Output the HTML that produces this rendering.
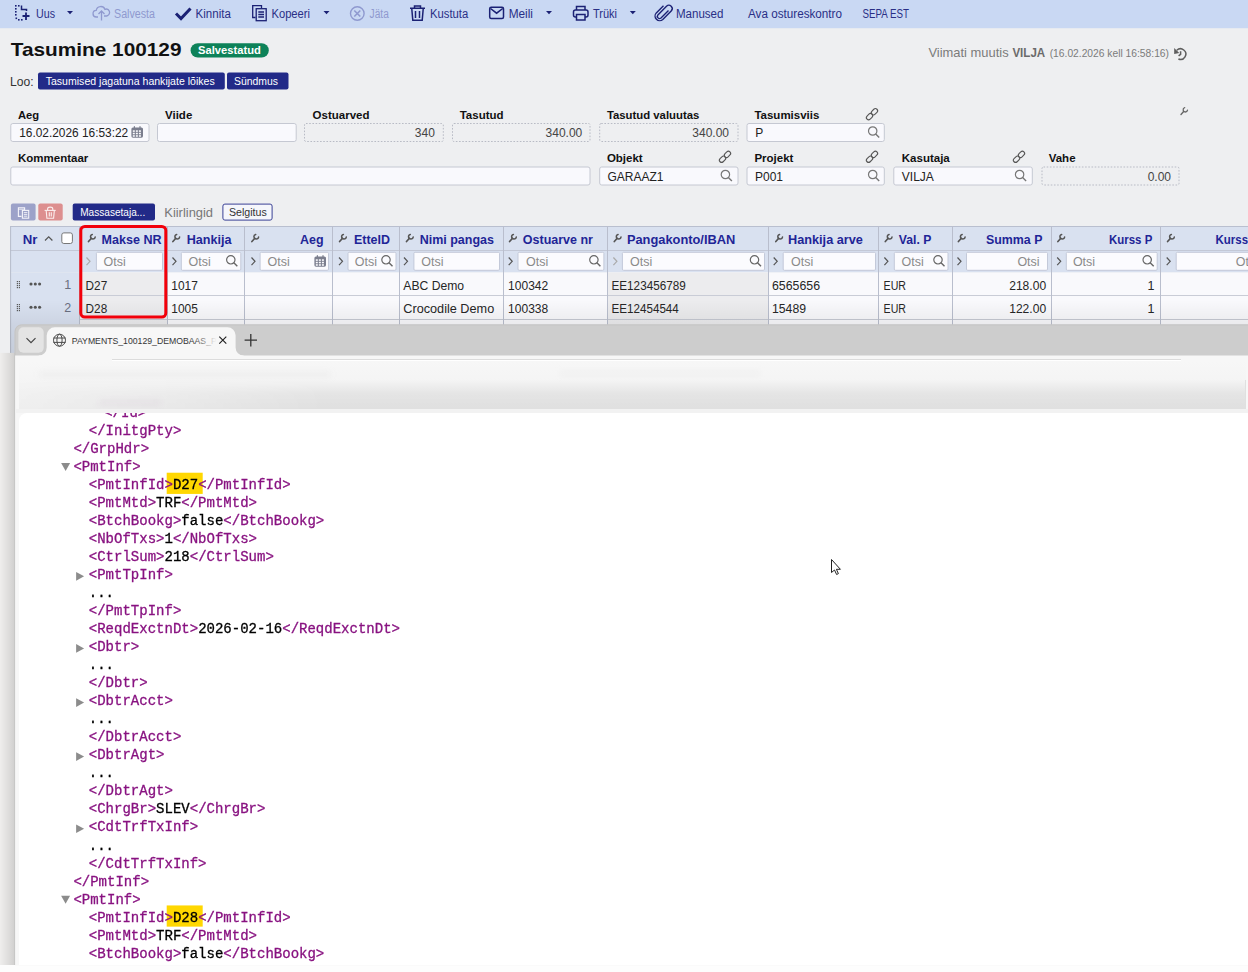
<!DOCTYPE html>
<html><head><meta charset="utf-8"><title>Tasumine 100129</title>
<style>html,body{margin:0;padding:0;width:1248px;height:972px;overflow:hidden;background:#eeeff1}svg{display:block}</style>
</head><body>
<svg width="1248" height="972" viewBox="0 0 1248 972"><rect x="0.00" y="0.00" width="1248.00" height="972.00" rx="0" fill="#eeeff1" />
<rect x="0.00" y="0.00" width="1248.00" height="28.20" rx="0" fill="#c9d8f3" />
<g fill="#1b2174"><rect x="15" y="5" width="1.6" height="1.6"/><rect x="18" y="5" width="1.6" height="1.6"/><rect x="15" y="8" width="1.6" height="1.6"/><rect x="15" y="11" width="1.6" height="1.6"/><rect x="15" y="14" width="1.6" height="1.6"/><rect x="15.5" y="17.5" width="1.6" height="1.6"/><rect x="18" y="19" width="1.6" height="1.6"/><rect x="21" y="19" width="1.6" height="1.6"/></g>
<path d="M21.5 5.5 V9.5 H26.5 V11" stroke="#1b2174" stroke-width="1.5" fill="none"/>
<path d="M22.5 16 H29.5 M26 12.5 V20" stroke="#1b2174" stroke-width="1.8" fill="none"/>
<text x="36.00" y="17.80" font-family='"Liberation Sans", sans-serif' font-size="12" font-weight="normal" fill="#2a2f86" text-anchor="start" textLength="19.00" lengthAdjust="spacingAndGlyphs" >Uus</text>
<path d="M67 11 L73 11 L70 14.3 Z" fill="#1b2174"/>
<path d="M98 17 H96.5 a3.3 3.3 0 0 1 -0.3 -6.6 a4.6 4.6 0 0 1 8.8 -1 a3.2 3.2 0 0 1 2.5 6.2 a2.5 2.5 0 0 1 -1 0.4 H104" stroke="#8f99cf" stroke-width="1.3" fill="none"/>
<path d="M101.5 20.5 V11.5 M98.5 14 L101.5 11 L104.5 14" stroke="#8f99cf" stroke-width="1.3" fill="none"/>
<text x="114.00" y="17.80" font-family='"Liberation Sans", sans-serif' font-size="12" font-weight="normal" fill="#8f99cf" text-anchor="start" textLength="41.00" lengthAdjust="spacingAndGlyphs" >Salvesta</text>
<path d="M176 13.5 L181 18.5 L190.5 8.5" stroke="#1b2174" stroke-width="3" fill="none" stroke-linejoin="miter"/>
<text x="195.60" y="17.80" font-family='"Liberation Sans", sans-serif' font-size="12" font-weight="normal" fill="#2a2f86" text-anchor="start" textLength="35.20" lengthAdjust="spacingAndGlyphs" >Kinnita</text>
<g stroke="#1b2174" stroke-width="1.3" fill="none"><path d="M255.5 17.5 H252.7 V5.7 H261.5 V8"/><rect x="256.2" y="8.7" width="10" height="12" fill="#c9d8f3"/><path d="M258.3 12 H264 M258.3 14.5 H264 M258.3 17 H264"/></g>
<text x="271.50" y="17.80" font-family='"Liberation Sans", sans-serif' font-size="12" font-weight="normal" fill="#2a2f86" text-anchor="start" textLength="38.50" lengthAdjust="spacingAndGlyphs" >Kopeeri</text>
<path d="M323.5 11 L329.5 11 L326.5 14.3 Z" fill="#1b2174"/>
<circle cx="357.3" cy="13.5" r="6.8" stroke="#8f99cf" stroke-width="1.4" fill="none"/>
<path d="M354.3 10.5 L360.3 16.5 M360.3 10.5 L354.3 16.5" stroke="#8f99cf" stroke-width="1.6"/>
<text x="369.60" y="17.80" font-family='"Liberation Sans", sans-serif' font-size="12" font-weight="normal" fill="#8f99cf" text-anchor="start" textLength="19.20" lengthAdjust="spacingAndGlyphs" >Jäta</text>
<g stroke="#1b2174" stroke-width="1.5" fill="none"><path d="M410 8.2 H425 M414.5 8 V6 H420.5 V8"/><path d="M411.8 9 L412.8 20.3 H422.2 L423.2 9"/><path d="M415.5 11 V18 M419.5 11 V18"/></g>
<text x="430.00" y="17.80" font-family='"Liberation Sans", sans-serif' font-size="12" font-weight="normal" fill="#2a2f86" text-anchor="start" textLength="38.30" lengthAdjust="spacingAndGlyphs" >Kustuta</text>
<rect x="489.7" y="7.2" width="13.8" height="11.2" rx="1.5" stroke="#1b2174" stroke-width="1.5" fill="none"/>
<path d="M490.5 8.5 L496.6 13.2 L502.7 8.5" stroke="#1b2174" stroke-width="1.5" fill="none"/>
<text x="508.70" y="17.80" font-family='"Liberation Sans", sans-serif' font-size="12" font-weight="normal" fill="#2a2f86" text-anchor="start" textLength="24.30" lengthAdjust="spacingAndGlyphs" >Meili</text>
<path d="M546 11 L552 11 L549 14.3 Z" fill="#1b2174"/>
<g stroke="#1b2174" stroke-width="1.5" fill="none"><path d="M576.5 10 V6.5 H585 V10"/><rect x="573.5" y="10" width="14.5" height="7" rx="2"/><rect x="576.5" y="14.5" width="8.5" height="5.5" fill="#c9d8f3"/></g>
<text x="593.00" y="17.80" font-family='"Liberation Sans", sans-serif' font-size="12" font-weight="normal" fill="#2a2f86" text-anchor="start" textLength="24.00" lengthAdjust="spacingAndGlyphs" >Trüki</text>
<path d="M629.8 11 L635.8 11 L632.8 14.3 Z" fill="#1b2174"/>
<path d="M668.5 10.5 L661 18 a2.2 2.2 0 0 1 -3.1 -3.1 L666.5 6.3 a3.3 3.3 0 0 1 4.7 4.7 L662.8 19.4 a4.6 4.6 0 0 1 -6.5 -6.5 L663.5 5.8" stroke="#1b2174" stroke-width="1.4" fill="none" transform="translate(0,0)"/>
<text x="675.90" y="17.80" font-family='"Liberation Sans", sans-serif' font-size="12" font-weight="normal" fill="#2a2f86" text-anchor="start" textLength="47.60" lengthAdjust="spacingAndGlyphs" >Manused</text>
<text x="748.00" y="17.80" font-family='"Liberation Sans", sans-serif' font-size="12" font-weight="normal" fill="#2a2f86" text-anchor="start" textLength="94.00" lengthAdjust="spacingAndGlyphs" >Ava ostureskontro</text>
<text x="862.60" y="17.80" font-family='"Liberation Sans", sans-serif' font-size="12" font-weight="normal" fill="#2a2f86" text-anchor="start" textLength="46.40" lengthAdjust="spacingAndGlyphs" >SEPA EST</text>
<text x="10.80" y="56.40" font-family='"Liberation Sans", sans-serif' font-size="19" font-weight="bold" fill="#111" text-anchor="start" textLength="170.70" lengthAdjust="spacingAndGlyphs" >Tasumine 100129</text>
<rect x="190.60" y="43.20" width="78.20" height="14.40" rx="7.2" fill="#0d8259" />
<text x="198.00" y="54.30" font-family='"Liberation Sans", sans-serif' font-size="11" font-weight="bold" fill="#ffffff" text-anchor="start" textLength="62.80" lengthAdjust="spacingAndGlyphs" >Salvestatud</text>
<text x="10.00" y="86.00" font-family='"Liberation Sans", sans-serif' font-size="12" font-weight="normal" fill="#333" text-anchor="start" textLength="23.60" lengthAdjust="spacingAndGlyphs" >Loo:</text>
<rect x="38.00" y="72.50" width="186.80" height="17.10" rx="2" fill="#222a88" />
<text x="45.70" y="85.20" font-family='"Liberation Sans", sans-serif' font-size="10.5" font-weight="normal" fill="#fff" text-anchor="start" textLength="169.00" lengthAdjust="spacingAndGlyphs" >Tasumised jagatuna hankijate lõikes</text>
<rect x="227.00" y="72.50" width="61.50" height="17.10" rx="2" fill="#222a88" />
<text x="234.00" y="85.20" font-family='"Liberation Sans", sans-serif' font-size="10.5" font-weight="normal" fill="#fff" text-anchor="start" textLength="44.00" lengthAdjust="spacingAndGlyphs" >Sündmus</text>
<text x="928.50" y="57.20" font-family='"Liberation Sans", sans-serif' font-size="13" font-weight="normal" fill="#7b7b7b" text-anchor="start" textLength="80.10" lengthAdjust="spacingAndGlyphs" >Viimati muutis</text>
<text x="1012.40" y="57.20" font-family='"Liberation Sans", sans-serif' font-size="12" font-weight="bold" fill="#6b6b6b" text-anchor="start" textLength="32.80" lengthAdjust="spacingAndGlyphs" >VILJA</text>
<text x="1049.70" y="57.20" font-family='"Liberation Sans", sans-serif' font-size="10.3" font-weight="normal" fill="#7b7b7b" text-anchor="start" textLength="119.30" lengthAdjust="spacingAndGlyphs" >(16.02.2026 kell 16:58:16)</text>
<g stroke="#5e5e5e" stroke-width="1.5" fill="none"><path d="M1176.8 50.3 A5.3 5.3 0 1 1 1178.4 59.0"/><path d="M1180.6 51.2 V54.3 L1178.6 55.8"/></g>
<path d="M1174.2 48 L1174.2 53.9 L1179.3 53.1 Z" fill="#5e5e5e"/>
<text x="18.00" y="119.20" font-family='"Liberation Sans", sans-serif' font-size="11.5" font-weight="bold" fill="#111" text-anchor="start" textLength="21.20" lengthAdjust="spacingAndGlyphs" >Aeg</text>
<text x="165.00" y="119.20" font-family='"Liberation Sans", sans-serif' font-size="11.5" font-weight="bold" fill="#111" text-anchor="start" >Viide</text>
<text x="312.60" y="119.20" font-family='"Liberation Sans", sans-serif' font-size="11.5" font-weight="bold" fill="#111" text-anchor="start" >Ostuarved</text>
<text x="459.70" y="119.20" font-family='"Liberation Sans", sans-serif' font-size="11.5" font-weight="bold" fill="#111" text-anchor="start" >Tasutud</text>
<text x="606.90" y="119.20" font-family='"Liberation Sans", sans-serif' font-size="11.5" font-weight="bold" fill="#111" text-anchor="start" textLength="92.40" lengthAdjust="spacingAndGlyphs" >Tasutud valuutas</text>
<text x="754.40" y="119.20" font-family='"Liberation Sans", sans-serif' font-size="11.5" font-weight="bold" fill="#111" text-anchor="start" >Tasumisviis</text>
<g transform="translate(866.00,108.70) rotate(-45 6 5.5)" stroke="#555" stroke-width="1.1" fill="none"><rect x="-1" y="3.3" width="7" height="4.4" rx="2.2"/><rect x="6" y="3.3" width="7" height="4.4" rx="2.2"/></g>
<g transform="translate(1180.2,106.8)" stroke="#666" fill="none" stroke-linecap="round"><path d="M0.8 7.6 L3.4 4.8" stroke-width="1.4"/><path d="M4.5 0.9 A2.2 2.2 0 1 0 7.3 3.4" stroke-width="1.3"/></g>
<rect x="10.80" y="123.50" width="138.20" height="18.00" rx="2" fill="#f9f9fd" stroke="#c5c8d2" stroke-width="1" />
<text x="19.20" y="137.20" font-family='"Liberation Sans", sans-serif' font-size="12" font-weight="normal" fill="#222" text-anchor="start" textLength="109.00" lengthAdjust="spacingAndGlyphs" >16.02.2026 16:53:22</text>
<g transform="translate(131.40,126.20)"><rect x="0" y="1.2" width="11.6" height="10.3" rx="1.6" fill="#7b7e8e"/><rect x="2.4" y="0" width="1.2" height="2" fill="#7b7e8e"/><rect x="8" y="0" width="1.2" height="2" fill="#7b7e8e"/><rect x="1.40" y="4.10" width="2.0" height="1.55" fill="#fbfbfe"/><rect x="4.45" y="4.10" width="2.0" height="1.55" fill="#fbfbfe"/><rect x="7.50" y="4.10" width="2.0" height="1.55" fill="#fbfbfe"/><rect x="1.40" y="6.55" width="2.0" height="1.55" fill="#fbfbfe"/><rect x="4.45" y="6.55" width="2.0" height="1.55" fill="#fbfbfe"/><rect x="7.50" y="6.55" width="2.0" height="1.55" fill="#fbfbfe"/><rect x="1.40" y="9.00" width="2.0" height="1.55" fill="#fbfbfe"/><rect x="4.45" y="9.00" width="2.0" height="1.55" fill="#fbfbfe"/><rect x="7.50" y="9.00" width="2.0" height="1.55" fill="#fbfbfe"/></g>
<rect x="157.50" y="123.50" width="138.70" height="18.00" rx="2" fill="#f9f9fd" stroke="#c5c8d2" stroke-width="1" />
<rect x="304.50" y="123.50" width="138.80" height="18.00" rx="1.5" fill="#eeeff1" stroke="#b8bbc5" stroke-width="1" stroke-dasharray="1.6 1.6"/>
<text x="434.90" y="137.20" font-family='"Liberation Sans", sans-serif' font-size="12" font-weight="normal" fill="#444" text-anchor="end" >340</text>
<rect x="452.50" y="123.50" width="137.50" height="18.00" rx="1.5" fill="#eeeff1" stroke="#b8bbc5" stroke-width="1" stroke-dasharray="1.6 1.6"/>
<text x="582.30" y="137.20" font-family='"Liberation Sans", sans-serif' font-size="12" font-weight="normal" fill="#444" text-anchor="end" >340.00</text>
<rect x="599.70" y="123.50" width="138.30" height="18.00" rx="1.5" fill="#eeeff1" stroke="#b8bbc5" stroke-width="1" stroke-dasharray="1.6 1.6"/>
<text x="729.00" y="137.20" font-family='"Liberation Sans", sans-serif' font-size="12" font-weight="normal" fill="#444" text-anchor="end" >340.00</text>
<rect x="747.00" y="123.50" width="137.30" height="18.00" rx="2" fill="#f9f9fd" stroke="#c5c8d2" stroke-width="1" />
<text x="755.20" y="137.20" font-family='"Liberation Sans", sans-serif' font-size="12" font-weight="normal" fill="#222" text-anchor="start" >P</text>
<g transform="translate(867.70,126.00) scale(1.0)" stroke="#777" stroke-width="1.2" fill="none"><circle cx="5" cy="5" r="4.2"/><path d="M8 8 L11.5 11.5" stroke-width="1.4"/></g>
<text x="18.00" y="162.30" font-family='"Liberation Sans", sans-serif' font-size="11.5" font-weight="bold" fill="#111" text-anchor="start" >Kommentaar</text>
<text x="606.90" y="162.30" font-family='"Liberation Sans", sans-serif' font-size="11.5" font-weight="bold" fill="#111" text-anchor="start" >Objekt</text>
<g transform="translate(719.00,151.30) rotate(-45 6 5.5)" stroke="#555" stroke-width="1.1" fill="none"><rect x="-1" y="3.3" width="7" height="4.4" rx="2.2"/><rect x="6" y="3.3" width="7" height="4.4" rx="2.2"/></g>
<text x="754.40" y="162.30" font-family='"Liberation Sans", sans-serif' font-size="11.5" font-weight="bold" fill="#111" text-anchor="start" >Projekt</text>
<g transform="translate(866.00,151.30) rotate(-45 6 5.5)" stroke="#555" stroke-width="1.1" fill="none"><rect x="-1" y="3.3" width="7" height="4.4" rx="2.2"/><rect x="6" y="3.3" width="7" height="4.4" rx="2.2"/></g>
<text x="901.80" y="162.30" font-family='"Liberation Sans", sans-serif' font-size="11.5" font-weight="bold" fill="#111" text-anchor="start" >Kasutaja</text>
<g transform="translate(1013.00,151.30) rotate(-45 6 5.5)" stroke="#555" stroke-width="1.1" fill="none"><rect x="-1" y="3.3" width="7" height="4.4" rx="2.2"/><rect x="6" y="3.3" width="7" height="4.4" rx="2.2"/></g>
<text x="1048.70" y="162.30" font-family='"Liberation Sans", sans-serif' font-size="11.5" font-weight="bold" fill="#111" text-anchor="start" >Vahe</text>
<rect x="10.80" y="167.00" width="579.20" height="18.00" rx="2" fill="#f9f9fd" stroke="#c5c8d2" stroke-width="1" />
<rect x="599.70" y="167.00" width="138.30" height="18.00" rx="2" fill="#f9f9fd" stroke="#c5c8d2" stroke-width="1" />
<text x="607.40" y="180.60" font-family='"Liberation Sans", sans-serif' font-size="12" font-weight="normal" fill="#222" text-anchor="start" >GARAAZ1</text>
<g transform="translate(720.40,169.50) scale(1.0)" stroke="#777" stroke-width="1.2" fill="none"><circle cx="5" cy="5" r="4.2"/><path d="M8 8 L11.5 11.5" stroke-width="1.4"/></g>
<rect x="747.00" y="167.00" width="137.30" height="18.00" rx="2" fill="#f9f9fd" stroke="#c5c8d2" stroke-width="1" />
<text x="755.00" y="180.60" font-family='"Liberation Sans", sans-serif' font-size="12" font-weight="normal" fill="#222" text-anchor="start" >P001</text>
<g transform="translate(867.70,169.50) scale(1.0)" stroke="#777" stroke-width="1.2" fill="none"><circle cx="5" cy="5" r="4.2"/><path d="M8 8 L11.5 11.5" stroke-width="1.4"/></g>
<rect x="893.80" y="167.00" width="138.50" height="18.00" rx="2" fill="#f9f9fd" stroke="#c5c8d2" stroke-width="1" />
<text x="901.80" y="180.60" font-family='"Liberation Sans", sans-serif' font-size="12" font-weight="normal" fill="#222" text-anchor="start" >VILJA</text>
<g transform="translate(1014.60,169.50) scale(1.0)" stroke="#777" stroke-width="1.2" fill="none"><circle cx="5" cy="5" r="4.2"/><path d="M8 8 L11.5 11.5" stroke-width="1.4"/></g>
<rect x="1042.00" y="167.00" width="137.00" height="18.00" rx="1.5" fill="#eeeff1" stroke="#b8bbc5" stroke-width="1" stroke-dasharray="1.6 1.6"/>
<text x="1171.00" y="180.60" font-family='"Liberation Sans", sans-serif' font-size="12" font-weight="normal" fill="#444" text-anchor="end" >0.00</text>
<rect x="10.90" y="203.60" width="24.70" height="17.00" rx="2" fill="#9ca2c9" />
<g stroke="#f4f4fa" stroke-width="1.1" fill="none"><path d="M21.5 216.4 H18.4 V207.7 H24.6 V210"/><path d="M18.6 209.2 H24.4" stroke-width="0.9"/><rect x="22.4" y="210.4" width="6.3" height="7.8" fill="#9ca2c9"/><path d="M23.8 212.6 H27.3 M23.8 214.4 H27.3 M23.8 216.2 H27.3" stroke-width="0.9"/></g>
<rect x="38.30" y="203.60" width="24.40" height="17.00" rx="2" fill="#dd8f8f" />
<g stroke="#fbeeee" stroke-width="1.1" fill="none"><path d="M44.6 210.4 H55.7"/><path d="M47.6 210.2 V209 a2.6 1.9 0 0 1 5.2 0 V210.2"/><path d="M46.2 210.6 L46.9 218.3 H53.6 L54.3 210.6"/><path d="M49.3 212.3 V216.6 M51.3 212.3 V216.6"/></g>
<rect x="72.70" y="203.60" width="82.30" height="17.00" rx="2" fill="#222a88" />
<text x="80.20" y="216.30" font-family='"Liberation Sans", sans-serif' font-size="10" font-weight="normal" fill="#fff" text-anchor="start" textLength="65.00" lengthAdjust="spacingAndGlyphs" >Massasetaja...</text>
<text x="164.30" y="217.30" font-family='"Liberation Sans", sans-serif' font-size="13" font-weight="normal" fill="#777" text-anchor="start" textLength="48.70" lengthAdjust="spacingAndGlyphs" >Kiirlingid</text>
<rect x="222.90" y="204.10" width="49.20" height="16.00" rx="2" fill="#f5f6fb" stroke="#3a4196" stroke-width="1" />
<text x="229.00" y="216.30" font-family='"Liberation Sans", sans-serif' font-size="10.6" font-weight="normal" fill="#333" text-anchor="start" textLength="37.80" lengthAdjust="spacingAndGlyphs" >Selgitus</text>
<rect x="10.10" y="226.30" width="1237.90" height="46.20" rx="0" fill="#d9e1f0" />
<rect x="10.10" y="272.50" width="69.90" height="81.00" rx="0" fill="#d9e1f0" />
<rect x="80.00" y="272.50" width="1168.00" height="60.00" rx="0" fill="#f9f9fc" />
<rect x="80.00" y="272.50" width="87.30" height="60.00" rx="0" fill="#ececee" />
<rect x="607.20" y="272.50" width="160.80" height="60.00" rx="0" fill="#ececee" />
<line x1="10.10" y1="226.50" x2="1248.00" y2="226.50" stroke="#b9bfcf" stroke-width="1" />
<line x1="10.10" y1="250.50" x2="1248.00" y2="250.50" stroke="#c3c8d6" stroke-width="1" />
<line x1="80.00" y1="295.50" x2="1248.00" y2="295.50" stroke="#c9ccd6" stroke-width="1" />
<line x1="80.00" y1="319.50" x2="1248.00" y2="319.50" stroke="#c6c9d3" stroke-width="1" />
<line x1="10.60" y1="226.30" x2="10.60" y2="353.00" stroke="#b7bccb" stroke-width="1" />
<line x1="79.50" y1="226.30" x2="79.50" y2="330.00" stroke="#b9becd" stroke-width="1" />
<line x1="167.50" y1="226.30" x2="167.50" y2="330.00" stroke="#b9becd" stroke-width="1" />
<line x1="244.50" y1="226.30" x2="244.50" y2="330.00" stroke="#b9becd" stroke-width="1" />
<line x1="332.50" y1="226.30" x2="332.50" y2="330.00" stroke="#b9becd" stroke-width="1" />
<line x1="399.50" y1="226.30" x2="399.50" y2="330.00" stroke="#b9becd" stroke-width="1" />
<line x1="503.50" y1="226.30" x2="503.50" y2="330.00" stroke="#b9becd" stroke-width="1" />
<line x1="607.50" y1="226.30" x2="607.50" y2="330.00" stroke="#b9becd" stroke-width="1" />
<line x1="768.50" y1="226.30" x2="768.50" y2="330.00" stroke="#b9becd" stroke-width="1" />
<line x1="878.50" y1="226.30" x2="878.50" y2="330.00" stroke="#b9becd" stroke-width="1" />
<line x1="952.50" y1="226.30" x2="952.50" y2="330.00" stroke="#b9becd" stroke-width="1" />
<line x1="1051.50" y1="226.30" x2="1051.50" y2="330.00" stroke="#b9becd" stroke-width="1" />
<line x1="1160.50" y1="226.30" x2="1160.50" y2="330.00" stroke="#b9becd" stroke-width="1" />
<text x="22.80" y="243.90" font-family='"Liberation Sans", sans-serif' font-size="12.5" font-weight="bold" fill="#1f2597" text-anchor="start" textLength="14.70" lengthAdjust="spacingAndGlyphs" >Nr</text>
<path d="M45 240.5 L48.7 236.8 L52.4 240.5" stroke="#555" stroke-width="1.2" fill="none"/>
<rect x="61.80" y="232.90" width="10.60" height="10.60" rx="2" fill="#fff" stroke="#777" stroke-width="1" />
<text x="101.60" y="243.90" font-family='"Liberation Sans", sans-serif' font-size="12.5" font-weight="bold" fill="#1f2597" text-anchor="start" textLength="59.90" lengthAdjust="spacingAndGlyphs" >Makse NR</text>
<g transform="translate(87.60,233.50)" stroke="#555" fill="none" stroke-linecap="round"><path d="M0.9 8.0 L3.6 5.0" stroke-width="1.7"/><path d="M4.7 0.9 A2.35 2.35 0 1 0 7.6 3.5" stroke-width="1.5"/></g>
<text x="186.70" y="243.90" font-family='"Liberation Sans", sans-serif' font-size="12.5" font-weight="bold" fill="#1f2597" text-anchor="start" textLength="44.80" lengthAdjust="spacingAndGlyphs" >Hankija</text>
<g transform="translate(172.00,233.50)" stroke="#555" fill="none" stroke-linecap="round"><path d="M0.9 8.0 L3.6 5.0" stroke-width="1.7"/><path d="M4.7 0.9 A2.35 2.35 0 1 0 7.6 3.5" stroke-width="1.5"/></g>
<text x="323.50" y="243.90" font-family='"Liberation Sans", sans-serif' font-size="12.5" font-weight="bold" fill="#1f2597" text-anchor="end" textLength="23.50" lengthAdjust="spacingAndGlyphs" >Aeg</text>
<g transform="translate(251.00,233.50)" stroke="#555" fill="none" stroke-linecap="round"><path d="M0.9 8.0 L3.6 5.0" stroke-width="1.7"/><path d="M4.7 0.9 A2.35 2.35 0 1 0 7.6 3.5" stroke-width="1.5"/></g>
<text x="354.00" y="243.90" font-family='"Liberation Sans", sans-serif' font-size="12.5" font-weight="bold" fill="#1f2597" text-anchor="start" textLength="36.00" lengthAdjust="spacingAndGlyphs" >EtteID</text>
<g transform="translate(338.70,233.50)" stroke="#555" fill="none" stroke-linecap="round"><path d="M0.9 8.0 L3.6 5.0" stroke-width="1.7"/><path d="M4.7 0.9 A2.35 2.35 0 1 0 7.6 3.5" stroke-width="1.5"/></g>
<text x="419.70" y="243.90" font-family='"Liberation Sans", sans-serif' font-size="12.5" font-weight="bold" fill="#1f2597" text-anchor="start" textLength="74.30" lengthAdjust="spacingAndGlyphs" >Nimi pangas</text>
<g transform="translate(405.60,233.50)" stroke="#555" fill="none" stroke-linecap="round"><path d="M0.9 8.0 L3.6 5.0" stroke-width="1.7"/><path d="M4.7 0.9 A2.35 2.35 0 1 0 7.6 3.5" stroke-width="1.5"/></g>
<text x="522.80" y="243.90" font-family='"Liberation Sans", sans-serif' font-size="12.5" font-weight="bold" fill="#1f2597" text-anchor="start" textLength="70.20" lengthAdjust="spacingAndGlyphs" >Ostuarve nr</text>
<g transform="translate(508.70,233.50)" stroke="#555" fill="none" stroke-linecap="round"><path d="M0.9 8.0 L3.6 5.0" stroke-width="1.7"/><path d="M4.7 0.9 A2.35 2.35 0 1 0 7.6 3.5" stroke-width="1.5"/></g>
<text x="626.90" y="243.90" font-family='"Liberation Sans", sans-serif' font-size="12.5" font-weight="bold" fill="#1f2597" text-anchor="start" textLength="108.40" lengthAdjust="spacingAndGlyphs" >Pangakonto/IBAN</text>
<g transform="translate(613.40,233.50)" stroke="#555" fill="none" stroke-linecap="round"><path d="M0.9 8.0 L3.6 5.0" stroke-width="1.7"/><path d="M4.7 0.9 A2.35 2.35 0 1 0 7.6 3.5" stroke-width="1.5"/></g>
<text x="788.00" y="243.90" font-family='"Liberation Sans", sans-serif' font-size="12.5" font-weight="bold" fill="#1f2597" text-anchor="start" textLength="74.90" lengthAdjust="spacingAndGlyphs" >Hankija arve</text>
<g transform="translate(774.90,233.50)" stroke="#555" fill="none" stroke-linecap="round"><path d="M0.9 8.0 L3.6 5.0" stroke-width="1.7"/><path d="M4.7 0.9 A2.35 2.35 0 1 0 7.6 3.5" stroke-width="1.5"/></g>
<text x="898.80" y="243.90" font-family='"Liberation Sans", sans-serif' font-size="12.5" font-weight="bold" fill="#1f2597" text-anchor="start" textLength="32.50" lengthAdjust="spacingAndGlyphs" >Val. P</text>
<g transform="translate(884.40,233.50)" stroke="#555" fill="none" stroke-linecap="round"><path d="M0.9 8.0 L3.6 5.0" stroke-width="1.7"/><path d="M4.7 0.9 A2.35 2.35 0 1 0 7.6 3.5" stroke-width="1.5"/></g>
<text x="1042.40" y="243.90" font-family='"Liberation Sans", sans-serif' font-size="12.5" font-weight="bold" fill="#1f2597" text-anchor="end" textLength="56.40" lengthAdjust="spacingAndGlyphs" >Summa P</text>
<g transform="translate(957.50,233.50)" stroke="#555" fill="none" stroke-linecap="round"><path d="M0.9 8.0 L3.6 5.0" stroke-width="1.7"/><path d="M4.7 0.9 A2.35 2.35 0 1 0 7.6 3.5" stroke-width="1.5"/></g>
<text x="1152.30" y="243.90" font-family='"Liberation Sans", sans-serif' font-size="12.5" font-weight="bold" fill="#1f2597" text-anchor="end" textLength="43.30" lengthAdjust="spacingAndGlyphs" >Kurss P</text>
<g transform="translate(1057.00,233.50)" stroke="#555" fill="none" stroke-linecap="round"><path d="M0.9 8.0 L3.6 5.0" stroke-width="1.7"/><path d="M4.7 0.9 A2.35 2.35 0 1 0 7.6 3.5" stroke-width="1.5"/></g>
<text x="1215.60" y="243.90" font-family='"Liberation Sans", sans-serif' font-size="12.5" font-weight="bold" fill="#1f2597" text-anchor="start" textLength="43.30" lengthAdjust="spacingAndGlyphs" >Kurss P</text>
<g transform="translate(1166.70,233.50)" stroke="#555" fill="none" stroke-linecap="round"><path d="M0.9 8.0 L3.6 5.0" stroke-width="1.7"/><path d="M4.7 0.9 A2.35 2.35 0 1 0 7.6 3.5" stroke-width="1.5"/></g>
<path d="M86.50 257.50 l3.5 3.8 l-3.5 3.8" stroke="#aaa" stroke-width="1.2" fill="none"/>
<rect x="96.40" y="252.30" width="66.10" height="18.00" rx="1.2" fill="#fbfbfe" stroke="#c3c9d9" stroke-width="1" />
<text x="103.60" y="266.30" font-family='"Liberation Sans", sans-serif' font-size="12.5" font-weight="normal" fill="#8a8a8a" text-anchor="start" textLength="22.20" lengthAdjust="spacingAndGlyphs" >Otsi</text>
<path d="M172.50 257.50 l3.5 3.8 l-3.5 3.8" stroke="#555" stroke-width="1.2" fill="none"/>
<rect x="181.30" y="252.30" width="59.50" height="18.00" rx="1.2" fill="#fbfbfe" stroke="#c3c9d9" stroke-width="1" />
<text x="188.50" y="266.30" font-family='"Liberation Sans", sans-serif' font-size="12.5" font-weight="normal" fill="#8a8a8a" text-anchor="start" textLength="22.20" lengthAdjust="spacingAndGlyphs" >Otsi</text>
<g transform="translate(225.80,254.80) scale(1.0)" stroke="#666" stroke-width="1.2" fill="none"><circle cx="5" cy="5" r="4.2"/><path d="M8 8 L11.5 11.5" stroke-width="1.4"/></g>
<path d="M251.50 257.50 l3.5 3.8 l-3.5 3.8" stroke="#555" stroke-width="1.2" fill="none"/>
<rect x="260.10" y="252.30" width="68.40" height="18.00" rx="1.2" fill="#fbfbfe" stroke="#c3c9d9" stroke-width="1" />
<text x="267.50" y="266.30" font-family='"Liberation Sans", sans-serif' font-size="12.5" font-weight="normal" fill="#8a8a8a" text-anchor="start" textLength="22.20" lengthAdjust="spacingAndGlyphs" >Otsi</text>
<g transform="translate(314.40,255.20)"><rect x="0" y="1.2" width="11.6" height="10.3" rx="1.6" fill="#7b7e8e"/><rect x="2.4" y="0" width="1.2" height="2" fill="#7b7e8e"/><rect x="8" y="0" width="1.2" height="2" fill="#7b7e8e"/><rect x="1.40" y="4.10" width="2.0" height="1.55" fill="#fbfbfe"/><rect x="4.45" y="4.10" width="2.0" height="1.55" fill="#fbfbfe"/><rect x="7.50" y="4.10" width="2.0" height="1.55" fill="#fbfbfe"/><rect x="1.40" y="6.55" width="2.0" height="1.55" fill="#fbfbfe"/><rect x="4.45" y="6.55" width="2.0" height="1.55" fill="#fbfbfe"/><rect x="7.50" y="6.55" width="2.0" height="1.55" fill="#fbfbfe"/><rect x="1.40" y="9.00" width="2.0" height="1.55" fill="#fbfbfe"/><rect x="4.45" y="9.00" width="2.0" height="1.55" fill="#fbfbfe"/><rect x="7.50" y="9.00" width="2.0" height="1.55" fill="#fbfbfe"/></g>
<path d="M339.00 257.50 l3.5 3.8 l-3.5 3.8" stroke="#555" stroke-width="1.2" fill="none"/>
<rect x="348.00" y="252.30" width="48.00" height="18.00" rx="1.2" fill="#fbfbfe" stroke="#c3c9d9" stroke-width="1" />
<text x="354.80" y="266.30" font-family='"Liberation Sans", sans-serif' font-size="12.5" font-weight="normal" fill="#8a8a8a" text-anchor="start" textLength="22.20" lengthAdjust="spacingAndGlyphs" >Otsi</text>
<g transform="translate(381.00,254.80) scale(1.0)" stroke="#666" stroke-width="1.2" fill="none"><circle cx="5" cy="5" r="4.2"/><path d="M8 8 L11.5 11.5" stroke-width="1.4"/></g>
<path d="M404.00 257.50 l3.5 3.8 l-3.5 3.8" stroke="#555" stroke-width="1.2" fill="none"/>
<rect x="413.90" y="252.30" width="85.60" height="18.00" rx="1.2" fill="#fbfbfe" stroke="#c3c9d9" stroke-width="1" />
<text x="421.30" y="266.30" font-family='"Liberation Sans", sans-serif' font-size="12.5" font-weight="normal" fill="#8a8a8a" text-anchor="start" textLength="22.20" lengthAdjust="spacingAndGlyphs" >Otsi</text>
<path d="M508.70 257.50 l3.5 3.8 l-3.5 3.8" stroke="#555" stroke-width="1.2" fill="none"/>
<rect x="518.00" y="252.30" width="85.90" height="18.00" rx="1.2" fill="#fbfbfe" stroke="#c3c9d9" stroke-width="1" />
<text x="526.00" y="266.30" font-family='"Liberation Sans", sans-serif' font-size="12.5" font-weight="normal" fill="#8a8a8a" text-anchor="start" textLength="22.20" lengthAdjust="spacingAndGlyphs" >Otsi</text>
<g transform="translate(588.90,254.80) scale(1.0)" stroke="#666" stroke-width="1.2" fill="none"><circle cx="5" cy="5" r="4.2"/><path d="M8 8 L11.5 11.5" stroke-width="1.4"/></g>
<path d="M613.40 257.50 l3.5 3.8 l-3.5 3.8" stroke="#aaa" stroke-width="1.2" fill="none"/>
<rect x="622.40" y="252.30" width="142.10" height="18.00" rx="1.2" fill="#fbfbfe" stroke="#c3c9d9" stroke-width="1" />
<text x="630.00" y="266.30" font-family='"Liberation Sans", sans-serif' font-size="12.5" font-weight="normal" fill="#8a8a8a" text-anchor="start" textLength="22.20" lengthAdjust="spacingAndGlyphs" >Otsi</text>
<g transform="translate(749.50,254.80) scale(1.0)" stroke="#666" stroke-width="1.2" fill="none"><circle cx="5" cy="5" r="4.2"/><path d="M8 8 L11.5 11.5" stroke-width="1.4"/></g>
<path d="M773.70 257.50 l3.5 3.8 l-3.5 3.8" stroke="#555" stroke-width="1.2" fill="none"/>
<rect x="783.20" y="252.30" width="92.30" height="18.00" rx="1.2" fill="#fbfbfe" stroke="#c3c9d9" stroke-width="1" />
<text x="791.00" y="266.30" font-family='"Liberation Sans", sans-serif' font-size="12.5" font-weight="normal" fill="#8a8a8a" text-anchor="start" textLength="22.20" lengthAdjust="spacingAndGlyphs" >Otsi</text>
<path d="M884.40 257.50 l3.5 3.8 l-3.5 3.8" stroke="#555" stroke-width="1.2" fill="none"/>
<rect x="894.30" y="252.30" width="53.70" height="18.00" rx="1.2" fill="#fbfbfe" stroke="#c3c9d9" stroke-width="1" />
<text x="901.60" y="266.30" font-family='"Liberation Sans", sans-serif' font-size="12.5" font-weight="normal" fill="#8a8a8a" text-anchor="start" textLength="22.20" lengthAdjust="spacingAndGlyphs" >Otsi</text>
<g transform="translate(933.00,254.80) scale(1.0)" stroke="#666" stroke-width="1.2" fill="none"><circle cx="5" cy="5" r="4.2"/><path d="M8 8 L11.5 11.5" stroke-width="1.4"/></g>
<path d="M957.50 257.50 l3.5 3.8 l-3.5 3.8" stroke="#555" stroke-width="1.2" fill="none"/>
<rect x="966.50" y="252.30" width="81.00" height="18.00" rx="1.2" fill="#fbfbfe" stroke="#c3c9d9" stroke-width="1" />
<text x="1039.60" y="266.30" font-family='"Liberation Sans", sans-serif' font-size="12.5" font-weight="normal" fill="#8a8a8a" text-anchor="end" textLength="22.20" lengthAdjust="spacingAndGlyphs" >Otsi</text>
<path d="M1057.20 257.50 l3.5 3.8 l-3.5 3.8" stroke="#555" stroke-width="1.2" fill="none"/>
<rect x="1066.30" y="252.30" width="90.90" height="18.00" rx="1.2" fill="#fbfbfe" stroke="#c3c9d9" stroke-width="1" />
<text x="1072.90" y="266.30" font-family='"Liberation Sans", sans-serif' font-size="12.5" font-weight="normal" fill="#8a8a8a" text-anchor="start" textLength="22.20" lengthAdjust="spacingAndGlyphs" >Otsi</text>
<g transform="translate(1142.20,254.80) scale(1.0)" stroke="#666" stroke-width="1.2" fill="none"><circle cx="5" cy="5" r="4.2"/><path d="M8 8 L11.5 11.5" stroke-width="1.4"/></g>
<path d="M1166.70 257.50 l3.5 3.8 l-3.5 3.8" stroke="#555" stroke-width="1.2" fill="none"/>
<rect x="1176.20" y="252.30" width="123.30" height="18.00" rx="1.2" fill="#fbfbfe" stroke="#c3c9d9" stroke-width="1" />
<text x="1258.00" y="266.30" font-family='"Liberation Sans", sans-serif' font-size="12.5" font-weight="normal" fill="#8a8a8a" text-anchor="end" textLength="22.20" lengthAdjust="spacingAndGlyphs" >Otsi</text>
<g fill="#5a5a5a"><rect x="16.80" y="281.00" width="1.2" height="1.2"/><rect x="18.80" y="281.00" width="1.2" height="1.2"/><rect x="16.80" y="283.00" width="1.2" height="1.2"/><rect x="18.80" y="283.00" width="1.2" height="1.2"/><rect x="16.80" y="285.00" width="1.2" height="1.2"/><rect x="18.80" y="285.00" width="1.2" height="1.2"/><rect x="16.80" y="287.00" width="1.2" height="1.2"/><rect x="18.80" y="287.00" width="1.2" height="1.2"/></g>
<g fill="#555"><circle cx="31.00" cy="284.00" r="1.55"/><circle cx="35.30" cy="284.00" r="1.55"/><circle cx="39.60" cy="284.00" r="1.55"/></g>
<text x="71.30" y="289.10" font-family='"Liberation Sans", sans-serif' font-size="12.5" font-weight="normal" fill="#6a6f80" text-anchor="end" >1</text>
<text x="85.60" y="289.50" font-family='"Liberation Sans", sans-serif' font-size="12.5" font-weight="normal" fill="#262626" text-anchor="start" textLength="21.60" lengthAdjust="spacingAndGlyphs" >D27</text>
<text x="171.30" y="289.50" font-family='"Liberation Sans", sans-serif' font-size="12.5" font-weight="normal" fill="#262626" text-anchor="start" textLength="26.50" lengthAdjust="spacingAndGlyphs" >1017</text>
<text x="403.30" y="289.50" font-family='"Liberation Sans", sans-serif' font-size="12.5" font-weight="normal" fill="#262626" text-anchor="start" textLength="60.80" lengthAdjust="spacingAndGlyphs" >ABC Demo</text>
<text x="508.10" y="289.50" font-family='"Liberation Sans", sans-serif' font-size="12.5" font-weight="normal" fill="#262626" text-anchor="start" textLength="40.10" lengthAdjust="spacingAndGlyphs" >100342</text>
<text x="611.50" y="289.50" font-family='"Liberation Sans", sans-serif' font-size="12.5" font-weight="normal" fill="#262626" text-anchor="start" textLength="74.20" lengthAdjust="spacingAndGlyphs" >EE123456789</text>
<text x="772.00" y="289.50" font-family='"Liberation Sans", sans-serif' font-size="12.5" font-weight="normal" fill="#262626" text-anchor="start" textLength="48.10" lengthAdjust="spacingAndGlyphs" >6565656</text>
<text x="883.60" y="289.50" font-family='"Liberation Sans", sans-serif' font-size="12.5" font-weight="normal" fill="#262626" text-anchor="start" textLength="22.40" lengthAdjust="spacingAndGlyphs" >EUR</text>
<text x="1046.10" y="289.50" font-family='"Liberation Sans", sans-serif' font-size="12.5" font-weight="normal" fill="#262626" text-anchor="end" textLength="36.90" lengthAdjust="spacingAndGlyphs" >218.00</text>
<text x="1154.40" y="289.50" font-family='"Liberation Sans", sans-serif' font-size="12.5" font-weight="normal" fill="#262626" text-anchor="end" >1</text>
<g fill="#5a5a5a"><rect x="16.80" y="304.00" width="1.2" height="1.2"/><rect x="18.80" y="304.00" width="1.2" height="1.2"/><rect x="16.80" y="306.00" width="1.2" height="1.2"/><rect x="18.80" y="306.00" width="1.2" height="1.2"/><rect x="16.80" y="308.00" width="1.2" height="1.2"/><rect x="18.80" y="308.00" width="1.2" height="1.2"/><rect x="16.80" y="310.00" width="1.2" height="1.2"/><rect x="18.80" y="310.00" width="1.2" height="1.2"/></g>
<g fill="#555"><circle cx="31.00" cy="307.30" r="1.55"/><circle cx="35.30" cy="307.30" r="1.55"/><circle cx="39.60" cy="307.30" r="1.55"/></g>
<text x="71.30" y="312.10" font-family='"Liberation Sans", sans-serif' font-size="12.5" font-weight="normal" fill="#6a6f80" text-anchor="end" >2</text>
<text x="85.60" y="312.50" font-family='"Liberation Sans", sans-serif' font-size="12.5" font-weight="normal" fill="#262626" text-anchor="start" textLength="21.60" lengthAdjust="spacingAndGlyphs" >D28</text>
<text x="171.30" y="312.50" font-family='"Liberation Sans", sans-serif' font-size="12.5" font-weight="normal" fill="#262626" text-anchor="start" textLength="26.50" lengthAdjust="spacingAndGlyphs" >1005</text>
<text x="403.30" y="312.50" font-family='"Liberation Sans", sans-serif' font-size="12.5" font-weight="normal" fill="#262626" text-anchor="start" textLength="90.90" lengthAdjust="spacingAndGlyphs" >Crocodile Demo</text>
<text x="508.10" y="312.50" font-family='"Liberation Sans", sans-serif' font-size="12.5" font-weight="normal" fill="#262626" text-anchor="start" textLength="40.10" lengthAdjust="spacingAndGlyphs" >100338</text>
<text x="611.50" y="312.50" font-family='"Liberation Sans", sans-serif' font-size="12.5" font-weight="normal" fill="#262626" text-anchor="start" textLength="67.30" lengthAdjust="spacingAndGlyphs" >EE12454544</text>
<text x="772.00" y="312.50" font-family='"Liberation Sans", sans-serif' font-size="12.5" font-weight="normal" fill="#262626" text-anchor="start" textLength="34.00" lengthAdjust="spacingAndGlyphs" >15489</text>
<text x="883.60" y="312.50" font-family='"Liberation Sans", sans-serif' font-size="12.5" font-weight="normal" fill="#262626" text-anchor="start" textLength="22.40" lengthAdjust="spacingAndGlyphs" >EUR</text>
<text x="1046.10" y="312.50" font-family='"Liberation Sans", sans-serif' font-size="12.5" font-weight="normal" fill="#262626" text-anchor="end" textLength="36.90" lengthAdjust="spacingAndGlyphs" >122.00</text>
<text x="1154.40" y="312.50" font-family='"Liberation Sans", sans-serif' font-size="12.5" font-weight="normal" fill="#262626" text-anchor="end" >1</text>
<defs><linearGradient id="appshade" x1="0" y1="0" x2="0" y2="1"><stop offset="0" stop-color="#000" stop-opacity="0"/><stop offset="0.47" stop-color="#000" stop-opacity="0.06"/><stop offset="1" stop-color="#000" stop-opacity="0.09"/></linearGradient></defs>
<rect x="10.10" y="300.00" width="1237.90" height="53.00" rx="0" fill="url(#appshade)" />
<rect x="80.80" y="226.40" width="85.00" height="90.70" rx="4" fill="none" stroke="#f2000a" stroke-width="3" />
<defs><linearGradient id="lstrip" x1="0" y1="0" x2="1" y2="0"><stop offset="0" stop-color="#efeeed"/><stop offset="0.6" stop-color="#dddcdb"/><stop offset="0.93" stop-color="#d2d1d0"/><stop offset="1" stop-color="#bdbcbb"/></linearGradient></defs>
<rect x="0.00" y="352.90" width="15.00" height="612.10" rx="0" fill="url(#lstrip)" />
<rect x="0.00" y="965.00" width="1248.00" height="7.00" rx="0" fill="#fdfdfd" />
<path d="M14.6 331.4 a7 7 0 0 1 7 -7 H1248 V965 H14.6 Z" fill="#cdcdcd"/>
<path d="M15.1 965 V331.4 a6.5 6.5 0 0 1 6.5 -6.5 H1248" stroke="#c4c4c4" stroke-width="1" fill="none"/>
<rect x="15.10" y="355.50" width="1233.40" height="610.00" rx="0" fill="#f7f7f7" />
<rect x="18.40" y="327.30" width="25.30" height="25.40" rx="5" fill="#e4e4e4" />
<path d="M26.5 338.2 L31 342.7 L35.5 338.2" stroke="#444" stroke-width="1.2" fill="none"/>
<path d="M38.7 355.5 a8 8 0 0 0 8 -8 V335.3 a8 8 0 0 1 8 -8 H227.6 a8 8 0 0 1 8 8 V347.5 a8 8 0 0 0 8 8 V356.5 H38.7 Z" fill="#f7f7f7"/>
<g stroke="#444" stroke-width="0.95" fill="none"><circle cx="59.5" cy="340.2" r="6"/><ellipse cx="59.5" cy="340.2" rx="2.6" ry="6"/><path d="M53.5 338 H65.5 M53.5 342.4 H65.5"/></g>
<defs><linearGradient id="tfade" x1="0" y1="0" x2="1" y2="0"><stop offset="0" stop-color="#333"/><stop offset="0.84" stop-color="#333"/><stop offset="1" stop-color="#333" stop-opacity="0"/></linearGradient></defs>
<text x="71.80" y="343.70" font-family='"Liberation Sans", sans-serif' font-size="9.2" font-weight="normal" fill="url(#tfade)" text-anchor="start" textLength="145.00" lengthAdjust="spacingAndGlyphs" >PAYMENTS_100129_DEMOBAAS_P</text>
<path d="M219.3 336.6 L226.3 343.6 M226.3 336.6 L219.3 343.6" stroke="#222" stroke-width="1.15"/>
<path d="M244.6 340.2 H257 M250.8 334 V346.4" stroke="#333" stroke-width="1.3"/>
<defs><filter id="blur8" x="-10%" y="-100%" width="120%" height="300%"><feGaussianBlur stdDeviation="3"/></filter><linearGradient id="tbgrad" x1="0" y1="0" x2="0" y2="1"><stop offset="0" stop-color="#f7f7f7"/><stop offset="0.5" stop-color="#f4f4f4"/><stop offset="1" stop-color="#f1f1f1"/></linearGradient><linearGradient id="bandv" x1="0" y1="0" x2="0" y2="1"><stop offset="0" stop-color="#000" stop-opacity="0"/><stop offset="0.45" stop-color="#000" stop-opacity="0.055"/><stop offset="1" stop-color="#000" stop-opacity="0.07"/></linearGradient><linearGradient id="bandh" x1="0" y1="0" x2="1" y2="0"><stop offset="0" stop-color="#fff" stop-opacity="0.15"/><stop offset="0.12" stop-color="#fff" stop-opacity="0.5"/><stop offset="0.25" stop-color="#fff" stop-opacity="1"/><stop offset="1" stop-color="#fff" stop-opacity="1"/></linearGradient><mask id="bandmask"><rect x="19" y="361" width="1227" height="48" fill="url(#bandh)"/></mask></defs>
<rect x="19.00" y="361.00" width="1227.00" height="48.00" rx="0" fill="url(#tbgrad)" />
<rect x="19.00" y="380.00" width="1227.00" height="29.00" rx="0" fill="url(#bandv)" mask="url(#bandmask)"/>
<g filter="url(#blur8)"><rect x="40" y="373" width="290" height="3" fill="#d8d8d8" opacity="0.45"/><rect x="560" y="372" width="200" height="3" fill="#dddddd" opacity="0.35"/><rect x="100" y="401" width="60" height="4" fill="#b07ab0" opacity="0.12"/></g>
<line x1="112.00" y1="359.50" x2="1181.00" y2="359.50" stroke="#dcdcdc" stroke-width="1" />
<line x1="112.00" y1="360.50" x2="1181.00" y2="360.50" stroke="#ffffff" stroke-width="1" />
<line x1="1245.50" y1="380.00" x2="1245.50" y2="409.00" stroke="#e0e0e0" stroke-width="1" />
<rect x="15.10" y="409.00" width="1233.40" height="4.00" rx="0" fill="#f2f2f2" />
<path d="M19 965 V421 a8 8 0 0 1 8 -8 H1248 V965 Z" fill="#ffffff"/>
<defs><clipPath id="cclip"><rect x="19" y="413" width="1229" height="552"/></clipPath></defs>
<g clip-path="url(#cclip)">
<rect x="166.70" y="472.72" width="36.00" height="21.20" rx="0" fill="#ffd700" />
<rect x="166.70" y="905.44" width="36.00" height="21.20" rx="0" fill="#ffd700" />
<text x="104.20" y="416.80" font-family='"Liberation Mono", monospace' font-size="14.02" font-weight="normal" fill="#881280" text-anchor="start" textLength="42.05" lengthAdjust="spacingAndGlyphs" xml:space="preserve" stroke="#881280" stroke-width="0.3">&lt;/Id&gt;</text>
<text x="88.80" y="434.83" font-family='"Liberation Mono", monospace' font-size="14.02" font-weight="normal" fill="#881280" text-anchor="start" textLength="92.51" lengthAdjust="spacingAndGlyphs" xml:space="preserve" stroke="#881280" stroke-width="0.3">&lt;/InitgPty&gt;</text>
<text x="73.40" y="452.86" font-family='"Liberation Mono", monospace' font-size="14.02" font-weight="normal" fill="#881280" text-anchor="start" textLength="75.69" lengthAdjust="spacingAndGlyphs" xml:space="preserve" stroke="#881280" stroke-width="0.3">&lt;/GrpHdr&gt;</text>
<path d="M61.10 462.99 h9 l-4.5 8 z" fill="#8c8c8c"/>
<text x="73.40" y="470.89" font-family='"Liberation Mono", monospace' font-size="14.02" font-weight="normal" fill="#881280" text-anchor="start" textLength="67.28" lengthAdjust="spacingAndGlyphs" xml:space="preserve" stroke="#881280" stroke-width="0.3">&lt;PmtInf&gt;</text>
<text x="88.80" y="488.92" font-family='"Liberation Mono", monospace' font-size="14.02" font-weight="normal" fill="#881280" text-anchor="start" textLength="84.10" lengthAdjust="spacingAndGlyphs" xml:space="preserve" stroke="#881280" stroke-width="0.3">&lt;PmtInfId&gt;</text>
<text x="172.90" y="488.92" font-family='"Liberation Mono", monospace' font-size="14.02" font-weight="normal" fill="#000" text-anchor="start" textLength="25.23" lengthAdjust="spacingAndGlyphs" xml:space="preserve" stroke="#000" stroke-width="0.3">D27</text>
<text x="198.13" y="488.92" font-family='"Liberation Mono", monospace' font-size="14.02" font-weight="normal" fill="#881280" text-anchor="start" textLength="92.51" lengthAdjust="spacingAndGlyphs" xml:space="preserve" stroke="#881280" stroke-width="0.3">&lt;/PmtInfId&gt;</text>
<text x="88.80" y="506.95" font-family='"Liberation Mono", monospace' font-size="14.02" font-weight="normal" fill="#881280" text-anchor="start" textLength="67.28" lengthAdjust="spacingAndGlyphs" xml:space="preserve" stroke="#881280" stroke-width="0.3">&lt;PmtMtd&gt;</text>
<text x="156.08" y="506.95" font-family='"Liberation Mono", monospace' font-size="14.02" font-weight="normal" fill="#000" text-anchor="start" textLength="25.23" lengthAdjust="spacingAndGlyphs" xml:space="preserve" stroke="#000" stroke-width="0.3">TRF</text>
<text x="181.31" y="506.95" font-family='"Liberation Mono", monospace' font-size="14.02" font-weight="normal" fill="#881280" text-anchor="start" textLength="75.69" lengthAdjust="spacingAndGlyphs" xml:space="preserve" stroke="#881280" stroke-width="0.3">&lt;/PmtMtd&gt;</text>
<text x="88.80" y="524.98" font-family='"Liberation Mono", monospace' font-size="14.02" font-weight="normal" fill="#881280" text-anchor="start" textLength="92.51" lengthAdjust="spacingAndGlyphs" xml:space="preserve" stroke="#881280" stroke-width="0.3">&lt;BtchBookg&gt;</text>
<text x="181.31" y="524.98" font-family='"Liberation Mono", monospace' font-size="14.02" font-weight="normal" fill="#000" text-anchor="start" textLength="42.05" lengthAdjust="spacingAndGlyphs" xml:space="preserve" stroke="#000" stroke-width="0.3">false</text>
<text x="223.36" y="524.98" font-family='"Liberation Mono", monospace' font-size="14.02" font-weight="normal" fill="#881280" text-anchor="start" textLength="100.92" lengthAdjust="spacingAndGlyphs" xml:space="preserve" stroke="#881280" stroke-width="0.3">&lt;/BtchBookg&gt;</text>
<text x="88.80" y="543.01" font-family='"Liberation Mono", monospace' font-size="14.02" font-weight="normal" fill="#881280" text-anchor="start" textLength="75.69" lengthAdjust="spacingAndGlyphs" xml:space="preserve" stroke="#881280" stroke-width="0.3">&lt;NbOfTxs&gt;</text>
<text x="164.49" y="543.01" font-family='"Liberation Mono", monospace' font-size="14.02" font-weight="normal" fill="#000" text-anchor="start" textLength="8.41" lengthAdjust="spacingAndGlyphs" xml:space="preserve" stroke="#000" stroke-width="0.3">1</text>
<text x="172.90" y="543.01" font-family='"Liberation Mono", monospace' font-size="14.02" font-weight="normal" fill="#881280" text-anchor="start" textLength="84.10" lengthAdjust="spacingAndGlyphs" xml:space="preserve" stroke="#881280" stroke-width="0.3">&lt;/NbOfTxs&gt;</text>
<text x="88.80" y="561.04" font-family='"Liberation Mono", monospace' font-size="14.02" font-weight="normal" fill="#881280" text-anchor="start" textLength="75.69" lengthAdjust="spacingAndGlyphs" xml:space="preserve" stroke="#881280" stroke-width="0.3">&lt;CtrlSum&gt;</text>
<text x="164.49" y="561.04" font-family='"Liberation Mono", monospace' font-size="14.02" font-weight="normal" fill="#000" text-anchor="start" textLength="25.23" lengthAdjust="spacingAndGlyphs" xml:space="preserve" stroke="#000" stroke-width="0.3">218</text>
<text x="189.72" y="561.04" font-family='"Liberation Mono", monospace' font-size="14.02" font-weight="normal" fill="#881280" text-anchor="start" textLength="84.10" lengthAdjust="spacingAndGlyphs" xml:space="preserve" stroke="#881280" stroke-width="0.3">&lt;/CtrlSum&gt;</text>
<path d="M76.10 571.97 v8.7 l8 -4.35 z" fill="#8c8c8c"/>
<text x="88.80" y="579.07" font-family='"Liberation Mono", monospace' font-size="14.02" font-weight="normal" fill="#881280" text-anchor="start" textLength="84.10" lengthAdjust="spacingAndGlyphs" xml:space="preserve" stroke="#881280" stroke-width="0.3">&lt;PmtTpInf&gt;</text>
<text x="88.80" y="597.10" font-family='"Liberation Mono", monospace' font-size="14.02" font-weight="normal" fill="#000" text-anchor="start" textLength="25.23" lengthAdjust="spacingAndGlyphs" xml:space="preserve" stroke="#000" stroke-width="0.3">...</text>
<text x="88.80" y="615.13" font-family='"Liberation Mono", monospace' font-size="14.02" font-weight="normal" fill="#881280" text-anchor="start" textLength="92.51" lengthAdjust="spacingAndGlyphs" xml:space="preserve" stroke="#881280" stroke-width="0.3">&lt;/PmtTpInf&gt;</text>
<text x="88.80" y="633.16" font-family='"Liberation Mono", monospace' font-size="14.02" font-weight="normal" fill="#881280" text-anchor="start" textLength="109.33" lengthAdjust="spacingAndGlyphs" xml:space="preserve" stroke="#881280" stroke-width="0.3">&lt;ReqdExctnDt&gt;</text>
<text x="198.13" y="633.16" font-family='"Liberation Mono", monospace' font-size="14.02" font-weight="normal" fill="#000" text-anchor="start" textLength="84.10" lengthAdjust="spacingAndGlyphs" xml:space="preserve" stroke="#000" stroke-width="0.3">2026-02-16</text>
<text x="282.23" y="633.16" font-family='"Liberation Mono", monospace' font-size="14.02" font-weight="normal" fill="#881280" text-anchor="start" textLength="117.74" lengthAdjust="spacingAndGlyphs" xml:space="preserve" stroke="#881280" stroke-width="0.3">&lt;/ReqdExctnDt&gt;</text>
<path d="M76.10 644.09 v8.7 l8 -4.35 z" fill="#8c8c8c"/>
<text x="88.80" y="651.19" font-family='"Liberation Mono", monospace' font-size="14.02" font-weight="normal" fill="#881280" text-anchor="start" textLength="50.46" lengthAdjust="spacingAndGlyphs" xml:space="preserve" stroke="#881280" stroke-width="0.3">&lt;Dbtr&gt;</text>
<text x="88.80" y="669.22" font-family='"Liberation Mono", monospace' font-size="14.02" font-weight="normal" fill="#000" text-anchor="start" textLength="25.23" lengthAdjust="spacingAndGlyphs" xml:space="preserve" stroke="#000" stroke-width="0.3">...</text>
<text x="88.80" y="687.25" font-family='"Liberation Mono", monospace' font-size="14.02" font-weight="normal" fill="#881280" text-anchor="start" textLength="58.87" lengthAdjust="spacingAndGlyphs" xml:space="preserve" stroke="#881280" stroke-width="0.3">&lt;/Dbtr&gt;</text>
<path d="M76.10 698.18 v8.7 l8 -4.35 z" fill="#8c8c8c"/>
<text x="88.80" y="705.28" font-family='"Liberation Mono", monospace' font-size="14.02" font-weight="normal" fill="#881280" text-anchor="start" textLength="84.10" lengthAdjust="spacingAndGlyphs" xml:space="preserve" stroke="#881280" stroke-width="0.3">&lt;DbtrAcct&gt;</text>
<text x="88.80" y="723.31" font-family='"Liberation Mono", monospace' font-size="14.02" font-weight="normal" fill="#000" text-anchor="start" textLength="25.23" lengthAdjust="spacingAndGlyphs" xml:space="preserve" stroke="#000" stroke-width="0.3">...</text>
<text x="88.80" y="741.34" font-family='"Liberation Mono", monospace' font-size="14.02" font-weight="normal" fill="#881280" text-anchor="start" textLength="92.51" lengthAdjust="spacingAndGlyphs" xml:space="preserve" stroke="#881280" stroke-width="0.3">&lt;/DbtrAcct&gt;</text>
<path d="M76.10 752.27 v8.7 l8 -4.35 z" fill="#8c8c8c"/>
<text x="88.80" y="759.37" font-family='"Liberation Mono", monospace' font-size="14.02" font-weight="normal" fill="#881280" text-anchor="start" textLength="75.69" lengthAdjust="spacingAndGlyphs" xml:space="preserve" stroke="#881280" stroke-width="0.3">&lt;DbtrAgt&gt;</text>
<text x="88.80" y="777.40" font-family='"Liberation Mono", monospace' font-size="14.02" font-weight="normal" fill="#000" text-anchor="start" textLength="25.23" lengthAdjust="spacingAndGlyphs" xml:space="preserve" stroke="#000" stroke-width="0.3">...</text>
<text x="88.80" y="795.43" font-family='"Liberation Mono", monospace' font-size="14.02" font-weight="normal" fill="#881280" text-anchor="start" textLength="84.10" lengthAdjust="spacingAndGlyphs" xml:space="preserve" stroke="#881280" stroke-width="0.3">&lt;/DbtrAgt&gt;</text>
<text x="88.80" y="813.46" font-family='"Liberation Mono", monospace' font-size="14.02" font-weight="normal" fill="#881280" text-anchor="start" textLength="67.28" lengthAdjust="spacingAndGlyphs" xml:space="preserve" stroke="#881280" stroke-width="0.3">&lt;ChrgBr&gt;</text>
<text x="156.08" y="813.46" font-family='"Liberation Mono", monospace' font-size="14.02" font-weight="normal" fill="#000" text-anchor="start" textLength="33.64" lengthAdjust="spacingAndGlyphs" xml:space="preserve" stroke="#000" stroke-width="0.3">SLEV</text>
<text x="189.72" y="813.46" font-family='"Liberation Mono", monospace' font-size="14.02" font-weight="normal" fill="#881280" text-anchor="start" textLength="75.69" lengthAdjust="spacingAndGlyphs" xml:space="preserve" stroke="#881280" stroke-width="0.3">&lt;/ChrgBr&gt;</text>
<path d="M76.10 824.39 v8.7 l8 -4.35 z" fill="#8c8c8c"/>
<text x="88.80" y="831.49" font-family='"Liberation Mono", monospace' font-size="14.02" font-weight="normal" fill="#881280" text-anchor="start" textLength="109.33" lengthAdjust="spacingAndGlyphs" xml:space="preserve" stroke="#881280" stroke-width="0.3">&lt;CdtTrfTxInf&gt;</text>
<text x="88.80" y="849.52" font-family='"Liberation Mono", monospace' font-size="14.02" font-weight="normal" fill="#000" text-anchor="start" textLength="25.23" lengthAdjust="spacingAndGlyphs" xml:space="preserve" stroke="#000" stroke-width="0.3">...</text>
<text x="88.80" y="867.55" font-family='"Liberation Mono", monospace' font-size="14.02" font-weight="normal" fill="#881280" text-anchor="start" textLength="117.74" lengthAdjust="spacingAndGlyphs" xml:space="preserve" stroke="#881280" stroke-width="0.3">&lt;/CdtTrfTxInf&gt;</text>
<text x="73.40" y="885.58" font-family='"Liberation Mono", monospace' font-size="14.02" font-weight="normal" fill="#881280" text-anchor="start" textLength="75.69" lengthAdjust="spacingAndGlyphs" xml:space="preserve" stroke="#881280" stroke-width="0.3">&lt;/PmtInf&gt;</text>
<path d="M61.10 895.71 h9 l-4.5 8 z" fill="#8c8c8c"/>
<text x="73.40" y="903.61" font-family='"Liberation Mono", monospace' font-size="14.02" font-weight="normal" fill="#881280" text-anchor="start" textLength="67.28" lengthAdjust="spacingAndGlyphs" xml:space="preserve" stroke="#881280" stroke-width="0.3">&lt;PmtInf&gt;</text>
<text x="88.80" y="921.64" font-family='"Liberation Mono", monospace' font-size="14.02" font-weight="normal" fill="#881280" text-anchor="start" textLength="84.10" lengthAdjust="spacingAndGlyphs" xml:space="preserve" stroke="#881280" stroke-width="0.3">&lt;PmtInfId&gt;</text>
<text x="172.90" y="921.64" font-family='"Liberation Mono", monospace' font-size="14.02" font-weight="normal" fill="#000" text-anchor="start" textLength="25.23" lengthAdjust="spacingAndGlyphs" xml:space="preserve" stroke="#000" stroke-width="0.3">D28</text>
<text x="198.13" y="921.64" font-family='"Liberation Mono", monospace' font-size="14.02" font-weight="normal" fill="#881280" text-anchor="start" textLength="92.51" lengthAdjust="spacingAndGlyphs" xml:space="preserve" stroke="#881280" stroke-width="0.3">&lt;/PmtInfId&gt;</text>
<text x="88.80" y="939.67" font-family='"Liberation Mono", monospace' font-size="14.02" font-weight="normal" fill="#881280" text-anchor="start" textLength="67.28" lengthAdjust="spacingAndGlyphs" xml:space="preserve" stroke="#881280" stroke-width="0.3">&lt;PmtMtd&gt;</text>
<text x="156.08" y="939.67" font-family='"Liberation Mono", monospace' font-size="14.02" font-weight="normal" fill="#000" text-anchor="start" textLength="25.23" lengthAdjust="spacingAndGlyphs" xml:space="preserve" stroke="#000" stroke-width="0.3">TRF</text>
<text x="181.31" y="939.67" font-family='"Liberation Mono", monospace' font-size="14.02" font-weight="normal" fill="#881280" text-anchor="start" textLength="75.69" lengthAdjust="spacingAndGlyphs" xml:space="preserve" stroke="#881280" stroke-width="0.3">&lt;/PmtMtd&gt;</text>
<text x="88.80" y="957.70" font-family='"Liberation Mono", monospace' font-size="14.02" font-weight="normal" fill="#881280" text-anchor="start" textLength="92.51" lengthAdjust="spacingAndGlyphs" xml:space="preserve" stroke="#881280" stroke-width="0.3">&lt;BtchBookg&gt;</text>
<text x="181.31" y="957.70" font-family='"Liberation Mono", monospace' font-size="14.02" font-weight="normal" fill="#000" text-anchor="start" textLength="42.05" lengthAdjust="spacingAndGlyphs" xml:space="preserve" stroke="#000" stroke-width="0.3">false</text>
<text x="223.36" y="957.70" font-family='"Liberation Mono", monospace' font-size="14.02" font-weight="normal" fill="#881280" text-anchor="start" textLength="100.92" lengthAdjust="spacingAndGlyphs" xml:space="preserve" stroke="#881280" stroke-width="0.3">&lt;/BtchBookg&gt;</text>
</g>
<path d="M831.5 559.5 V572.5 L834.5 570 L836.6 574.5 L838.4 573.6 L836.4 569.3 L840.4 569.3 Z" fill="#fff" stroke="#222" stroke-width="1" stroke-linejoin="round"/></svg>
</body></html>
